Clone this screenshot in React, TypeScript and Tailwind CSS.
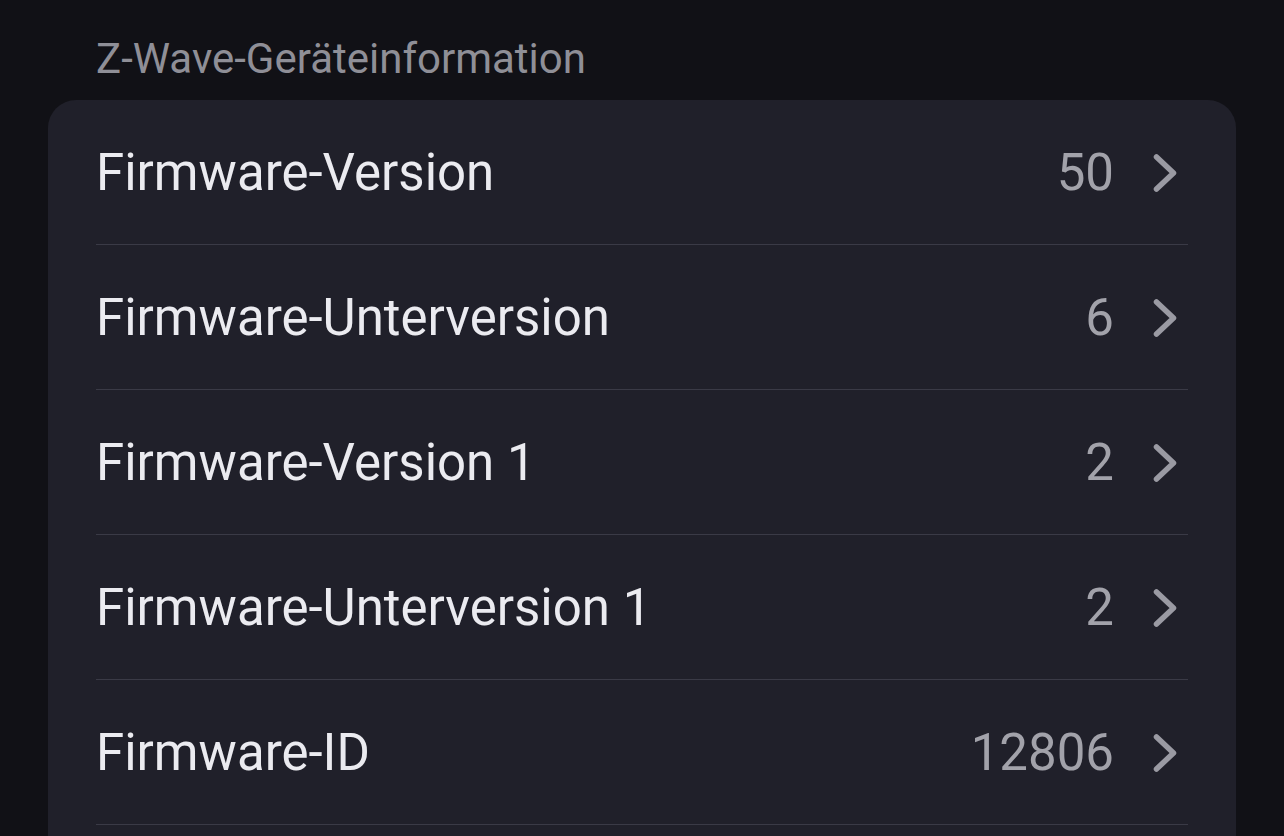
import React from "react";

const rows = [
  { label: "Firmware-Version", value: "50" },
  { label: "Firmware-Unterversion", value: "6" },
  { label: "Firmware-Version 1", value: "2" },
  { label: "Firmware-Unterversion 1", value: "2" },
  { label: "Firmware-ID", value: "12806" },
];

function Chevron() {
  return (
    <svg width="24" height="40" viewBox="0 0 24 40" className="shrink-0">
      <path d="M3.5 4 L20.5 20 L3.5 36" fill="none" stroke="#9a9aa3" strokeWidth="5.5" strokeLinecap="round" strokeLinejoin="round" />
    </svg>
  );
}

export default function App() {
  return (
    <div className="w-[1284px] h-[836px] overflow-hidden bg-[#111116] pt-[34px]" style={{ fontFamily: "Roboto, 'Noto Sans', sans-serif" }}>
      <div className="pl-[96px] text-[42px] leading-[50px] text-[#8f8f97]">Z-Wave-Geräteinformation</div>
      <div className="mx-[48px] mt-[16px] rounded-[28px] bg-[#20202a] pl-[48px] pr-[48px] pb-[80px]">
        {rows.map((r) => (
          <div key={r.label} className="flex h-[145px] items-center border-b border-[#3a3a46] pt-[2px]">
            <div className="flex-1 text-[51px] text-[#ebebf0]">{r.label}</div>
            <div className="text-[51px] text-[#a2a2aa] mr-[39px]">{r.value}</div>
            <div className="mr-[11px] flex items-center"><Chevron /></div>
          </div>
        ))}
      </div>
    </div>
  );
}
